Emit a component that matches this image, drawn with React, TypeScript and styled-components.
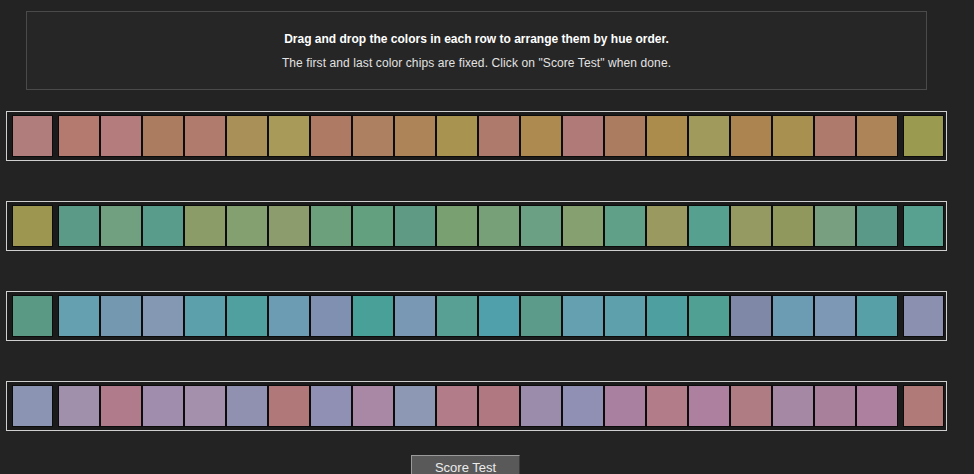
import React from 'react';
import styled, { createGlobalStyle } from 'styled-components';

const GlobalStyle = createGlobalStyle`
  html, body {
    margin: 0;
    padding: 0;
    background: #232323;
    font-family: "Liberation Sans", Arial, sans-serif;
    overflow: hidden;
  }
`;

const Page = styled.div`
  width: 974px;
  padding: 11px 0 0 6px;
  box-sizing: border-box;
  display: flex;
  flex-direction: column;
  & > * {
    flex-shrink: 0;
  }
`;

const InfoBox = styled.div`
  width: 901px;
  height: 79px;
  margin-left: 20px;
  box-sizing: border-box;
  border: 1px solid #4a4a4a;
  background: #262626;
  display: flex;
  flex-direction: column;
  align-items: center;
  padding-top: 20px;
  gap: 10px;
`;

const Title = styled.div`
  color: #ffffff;
  font-size: 12px;
  font-weight: 700;
  line-height: 14px;
`;

const Subtitle = styled.div`
  color: #e2e2e2;
  font-size: 12px;
  letter-spacing: 0.1px;
  line-height: 14px;
`;

const Rows = styled.div`
  display: flex;
  flex-direction: column;
  gap: 40px;
  margin-top: 21px;
`;

const Row = styled.div`
  width: 941px;
  height: 50px;
  box-sizing: border-box;
  border: 1px solid #cfcfcf;
  background: #1b1b1b;
  padding: 3px 4px 3px 5px;
  display: flex;
  align-items: center;
  gap: 5px;
`;

const Group = styled.div`
  display: flex;
`;

const Chip = styled.div<{ $fixed?: boolean }>`
  width: ${p => (p.$fixed ? 41 : 42)}px;
  height: 42px;
  box-sizing: border-box;
  border: 1px solid #0c0c0c;
  flex-shrink: 0;
  cursor: ${p => (p.$fixed ? 'default' : 'grab')};
`;

const Footer = styled.div`
  display: flex;
  justify-content: center;
  margin-top: 24px;
  padding-right: 49px;
`;

const ScoreButton = styled.button`
  width: 109px;
  height: 24px;
  background: #595959;
  border: 1px solid #9a9a9a;
  border-right-color: #3a3a3a;
  color: #ececec;
  font-family: "Liberation Sans", Arial, sans-serif;
  font-size: 13px;
  padding: 0;
  cursor: pointer;
`;

const rows: string[][] = [
  ['#b07c7c', '#b47a70', '#b47c7c', '#ac7c60', '#b07a6c', '#a89058', '#a89a58', '#ae7a64', '#ac8060', '#ac8458', '#a89450',
    '#ae7a6c', '#ac8a50', '#b07a78', '#ac7c60', '#ac8c4c', '#a09a5c', '#ac8450', '#a89050', '#ae7a6c', '#ac8458', '#9a9a50'],
  ['#9c9650', '#5c9a88', '#70a080', '#5a9c8c', '#8c9c68', '#84a070', '#8c9c6c', '#6ca07c', '#62a080', '#5e9a84', '#78a070',
    '#78a078', '#6ca084', '#86a070', '#60a088', '#9a9a60', '#56a090', '#949a62', '#90985e', '#78a080', '#5a9888', '#58a090'],
  ['#5a9a84', '#64a0b0', '#7498b0', '#8498b4', '#5ca0ac', '#50a0a0', '#6c9cb4', '#8090b0', '#48a098', '#7898b4', '#58a094',
    '#50a0ac', '#5c9a8a', '#64a0b0', '#5ea0ac', '#4ea0a0', '#50a094', '#8088a8', '#6c9cb4', '#7c98b4', '#58a0a8', '#8c90b0'],
  ['#8c94b4', '#a090ac', '#b07c8c', '#a08cac', '#a490ac', '#9090b0', '#b07878', '#9090b4', '#a888a4', '#8c98b4', '#b27c88',
    '#b07880', '#9c8cac', '#9090b4', '#aa80a0', '#b27c88', '#ae80a0', '#b07c84', '#a488a4', '#a8809c', '#ae80a0', '#b07a78'],
];

export default function App() {
  return (
    <>
      <GlobalStyle />
      <Page>
        <InfoBox>
          <Title>Drag and drop the colors in each row to arrange them by hue order.</Title>
          <Subtitle>The first and last color chips are fixed. Click on "Score Test" when done.</Subtitle>
        </InfoBox>
        <Rows>
          {rows.map((row, r) => (
            <Row key={r}>
              <Chip $fixed style={{ background: row[0] }} />
              <Group>
                {row.slice(1, -1).map((c, i) => (
                  <Chip key={i} style={{ background: c }} />
                ))}
              </Group>
              <Chip $fixed style={{ background: row[row.length - 1] }} />
            </Row>
          ))}
        </Rows>
        <Footer>
          <ScoreButton>Score Test</ScoreButton>
        </Footer>
      </Page>
    </>
  );
}
